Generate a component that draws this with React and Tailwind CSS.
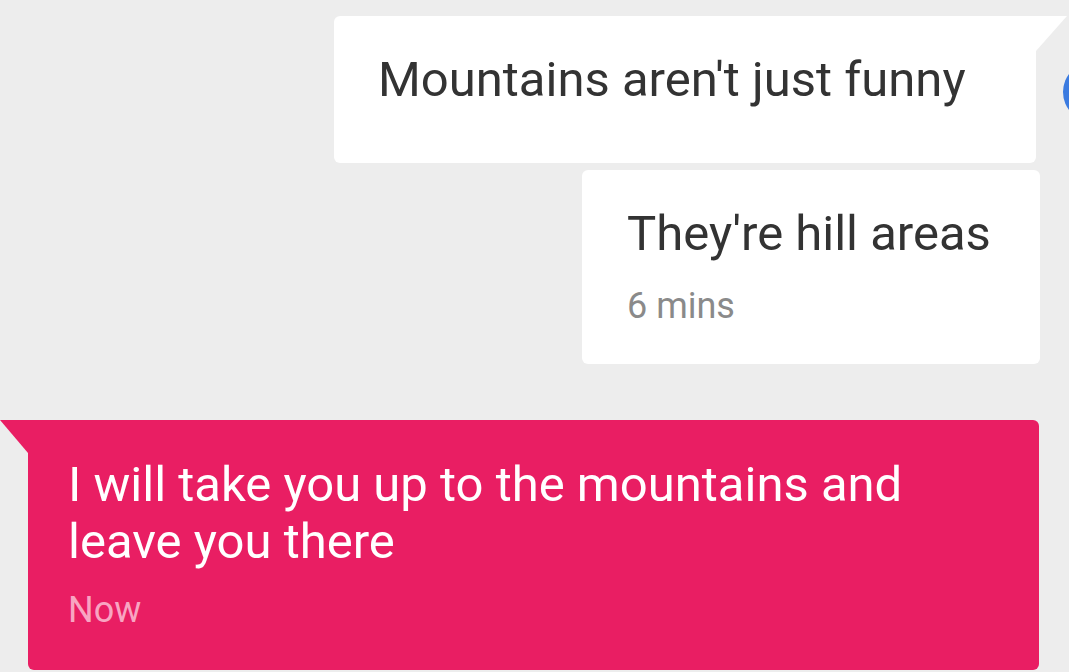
export default function App() {
  const font = { fontFamily: 'Roboto, "Liberation Sans", sans-serif' };
  return (
    <div className="relative w-[1069px] h-[672px] overflow-hidden bg-[#ededed]" style={font}>
      <div className="absolute left-[1063px] top-[62px] w-[60px] h-[60px] rounded-full bg-[#3b7be0]" />
      <div className="flex flex-col">
        <div className="relative self-end mt-[16px] mr-[33px] w-[702px] h-[147px] bg-white rounded-[6px] rounded-tr-none pl-[44px] pt-[34px]">
          <svg className="absolute left-full top-0" width="31" height="35" viewBox="0 0 31 35">
            <polygon points="0,0 31,0 0,35" fill="#ffffff" />
          </svg>
          <div className="text-[49px] leading-[60px] text-[#333333] whitespace-nowrap">Mountains aren't just funny</div>
        </div>
        <div className="self-end mt-[7px] mr-[29px] w-[458px] h-[194px] bg-white rounded-[6px] pl-[45px] pt-[34px]">
          <div className="text-[49px] leading-[60px] text-[#333333] whitespace-nowrap">They're hill areas</div>
          <div className="mt-[22px] text-[36px] leading-[40px] text-[#8a8a8a]">6 mins</div>
        </div>
        <div className="relative ml-[28px] mt-[56px] w-[1011px] h-[250px] bg-[#e91e63] rounded-[6px] rounded-tl-none pl-[40px] pt-[36px]">
          <svg className="absolute right-full top-0" width="28" height="33" viewBox="0 0 28 33">
            <polygon points="0,0 28,0 28,33" fill="#e91e63" />
          </svg>
          <div className="text-[49px] leading-[57px] text-white">
            I will take you up to the mountains and
            <br />
            leave you there
          </div>
          <div className="mt-[20px] text-[36px] leading-[40px] text-[#f8a5c2]">Now</div>
        </div>
      </div>
    </div>
  );
}
